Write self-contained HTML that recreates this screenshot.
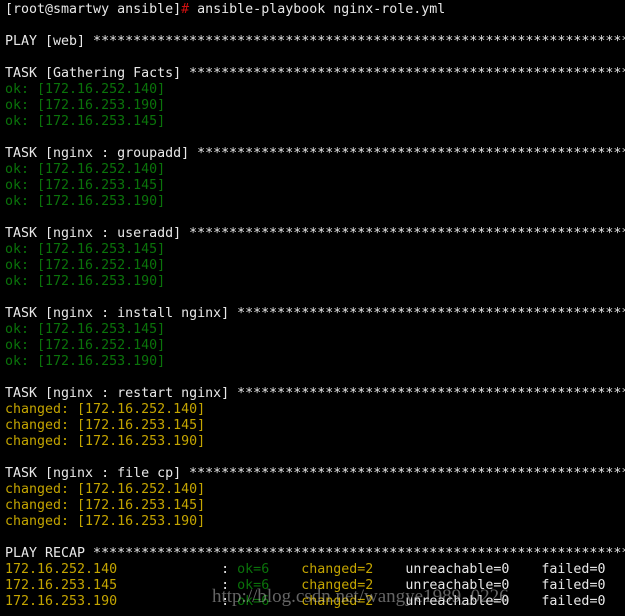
<!DOCTYPE html>
<html><head><meta charset="utf-8"><style>
html,body{margin:0;padding:0;background:#000;width:625px;height:616px;overflow:hidden}
pre{margin:0;padding:2px 0 0 5px;font-family:"DejaVu Sans Mono","Liberation Mono",monospace;font-size:13.3px;line-height:16px;color:#e8e8e8;white-space:pre;overflow:hidden;width:620px}
.g{color:#0a730a}.y{color:#c4a500}.r{color:#d01010}
.wm{position:absolute;left:212px;top:586px;font-family:"Liberation Serif",serif;font-size:19px;color:rgba(200,200,200,0.5);letter-spacing:0}
</style></head><body><pre>[root@smartwy ansible]<span class="r">#</span> ansible-playbook nginx-role.yml

PLAY [web] *********************************************************************

TASK [Gathering Facts] *********************************************************
<span class="g">ok: [172.16.252.140]</span>
<span class="g">ok: [172.16.253.190]</span>
<span class="g">ok: [172.16.253.145]</span>

TASK [nginx : groupadd] ********************************************************
<span class="g">ok: [172.16.252.140]</span>
<span class="g">ok: [172.16.253.145]</span>
<span class="g">ok: [172.16.253.190]</span>

TASK [nginx : useradd] *********************************************************
<span class="g">ok: [172.16.253.145]</span>
<span class="g">ok: [172.16.252.140]</span>
<span class="g">ok: [172.16.253.190]</span>

TASK [nginx : install nginx] ***************************************************
<span class="g">ok: [172.16.253.145]</span>
<span class="g">ok: [172.16.252.140]</span>
<span class="g">ok: [172.16.253.190]</span>

TASK [nginx : restart nginx] ***************************************************
<span class="y">changed: [172.16.252.140]</span>
<span class="y">changed: [172.16.253.145]</span>
<span class="y">changed: [172.16.253.190]</span>

TASK [nginx : file cp] *********************************************************
<span class="y">changed: [172.16.252.140]</span>
<span class="y">changed: [172.16.253.145]</span>
<span class="y">changed: [172.16.253.190]</span>

PLAY RECAP *********************************************************************
<span class="y">172.16.252.140</span>             : <span class="g">ok=6</span>    <span class="y">changed=2</span>    unreachable=0    failed=0
<span class="y">172.16.253.145</span>             : <span class="g">ok=6</span>    <span class="y">changed=2</span>    unreachable=0    failed=0
<span class="y">172.16.253.190</span>             : <span class="g">ok=6</span>    <span class="y">changed=2</span>    unreachable=0    failed=0
</pre>
<div class="wm">http://blog.csdn.net/wangye1989_0226</div>
</body></html>
